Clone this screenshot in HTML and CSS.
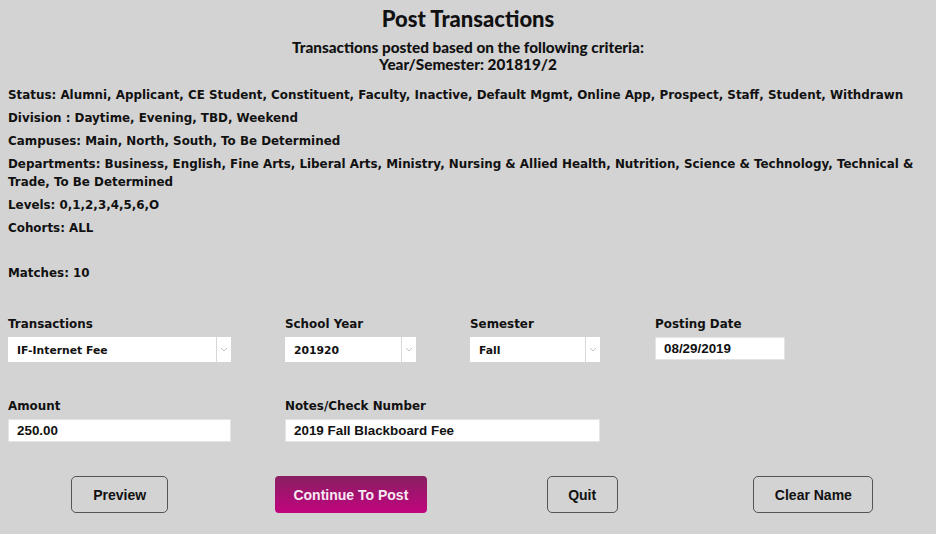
FILE: index.html
```html
<!DOCTYPE html>
<html>
<head>
<meta charset="utf-8">
<link rel="stylesheet" href="styles.css">
</head>
<body>
<div class="page">
  <h1 class="title">Post Transactions</h1>
  <div class="sub">
    <div>Transactions posted based on the following criteria:</div>
    <div>Year/Semester: 201819/2</div>
  </div>
  <div class="criteria">
    <p>Status: Alumni, Applicant, CE Student, Constituent, Faculty, Inactive, Default Mgmt, Online App, Prospect, Staff, Student, Withdrawn</p>
    <p>Division : Daytime, Evening, TBD, Weekend</p>
    <p>Campuses: Main, North, South, To Be Determined</p>
    <p>Departments: Business, English, Fine Arts, Liberal Arts, Ministry, Nursing &amp; Allied Health, Nutrition, Science &amp; Technology, Technical &amp; Trade, To Be Determined</p>
    <p>Levels: 0,1,2,3,4,5,6,O</p>
    <p>Cohorts: ALL</p>
    <p class="matches">Matches: 10</p>
  </div>

  <div class="form">
    <div class="field">
      <label>Transactions</label>
      <div class="select w223"><span>IF-Internet Fee</span><i class="arrow"><svg width="8" height="5" viewBox="0 0 8 5"><path d="M1 1 L4 4 L7 1" fill="none" stroke="#c4c4c4" stroke-width="1"/></svg></i></div>
    </div>
    <div class="field">
      <label>School Year</label>
      <div class="select w131"><span>201920</span><i class="arrow"><svg width="8" height="5" viewBox="0 0 8 5"><path d="M1 1 L4 4 L7 1" fill="none" stroke="#c4c4c4" stroke-width="1"/></svg></i></div>
    </div>
    <div class="field">
      <label>Semester</label>
      <div class="select w130"><span>Fall</span><i class="arrow"><svg width="8" height="5" viewBox="0 0 8 5"><path d="M1 1 L4 4 L7 1" fill="none" stroke="#c4c4c4" stroke-width="1"/></svg></i></div>
    </div>
    <div class="field">
      <label>Posting Date</label>
      <div class="input w130">08/29/2019</div>
    </div>

    <div class="field">
      <label>Amount</label>
      <div class="input w223">250.00</div>
    </div>
    <div class="field span2">
      <label>Notes/Check Number</label>
      <div class="input w315">2019 Fall Blackboard Fee</div>
    </div>
  </div>

  <div class="buttons">
    <button class="btn b-preview">Preview</button>
    <button class="btn primary b-continue">Continue To Post</button>
    <button class="btn b-quit">Quit</button>
    <button class="btn b-clear">Clear Name</button>
  </div>
</div>
</body>
</html>
```
FILE: styles.css
```css
html, body {
  margin: 0;
  padding: 0;
  background: #d3d3d3;
}
body {
  font-family: "DejaVu Sans", "Lato", sans-serif;
  font-weight: 700;
  color: #111;
}
.page {
  padding: 6px 8px 0 8px;
}
.title {
  margin: 0;
  text-align: center;
  font-family: "Lato", sans-serif;
  font-size: 22px;
  line-height: 26px;
  font-weight: 900;
}
.sub {
  margin-top: 7px;
  text-align: center;
  font-family: "Lato", sans-serif;
  font-size: 15.3px;
  line-height: 17px;
  font-weight: 900;
}
.criteria {
  margin-top: 13px;
  font-size: 11.9px;
  line-height: 18px;
}
.criteria p {
  margin: 0 0 5px 0;
}
.criteria p.matches {
  margin-top: 27px;
}
.form {
  margin-top: 33px;
  display: grid;
  grid-template-columns: 277px 185px 185px 1fr;
  row-gap: 35px;
}
.field {
  display: flex;
  flex-direction: column;
  align-items: flex-start;
}
.field.span2 {
  grid-column: span 2;
}
.field label {
  font-size: 11.9px;
  line-height: 18px;
  margin-bottom: 4px;
}
.select {
  height: 25px;
  background: #fff;
  display: flex;
  align-items: center;
  box-sizing: border-box;
  font-size: 10.8px;
}
.select span {
  flex: 1;
  padding-left: 9px;
  padding-top: 2px;
}
.select .arrow {
  width: 14px;
  height: 25px;
  border-left: 1px solid #d8d8d8;
  display: flex;
  align-items: center;
  justify-content: center;
}
.input {
  height: 23px;
  background: #fff;
  box-sizing: border-box;
  border: 1px solid #e4e4e4;
  padding-left: 8px;
  display: flex;
  align-items: center;
  font-family: "Liberation Sans", Arial, sans-serif;
  font-weight: 700;
  font-size: 13.4px;
}
.w223 { width: 223px; }
.w131 { width: 131px; }
.w130 { width: 130px; }
.w315 { width: 315px; }
.buttons {
  margin-top: 34px;
  display: grid;
  grid-template-columns: repeat(4, 1fr);
  justify-items: center;
  width: 925px;
  margin-left: -4px;
}
.btn {
  height: 37px;
  box-sizing: border-box;
  border: 1px solid #555;
  border-radius: 5px;
  background: #d3d3d3;
  font-family: "Liberation Sans", Arial, sans-serif;
  font-weight: 700;
  font-size: 14px;
  color: #111;
  padding: 0;
}
.b-preview { width: 97px; }
.b-continue { width: 152px; }
.b-quit { width: 71px; }
.b-clear { width: 120px; }
.btn.primary {
  border: none;
  border-radius: 4px;
  background: linear-gradient(to bottom, #8a1f62, #c0047e);
  color: #f6eaf2;
}
```
